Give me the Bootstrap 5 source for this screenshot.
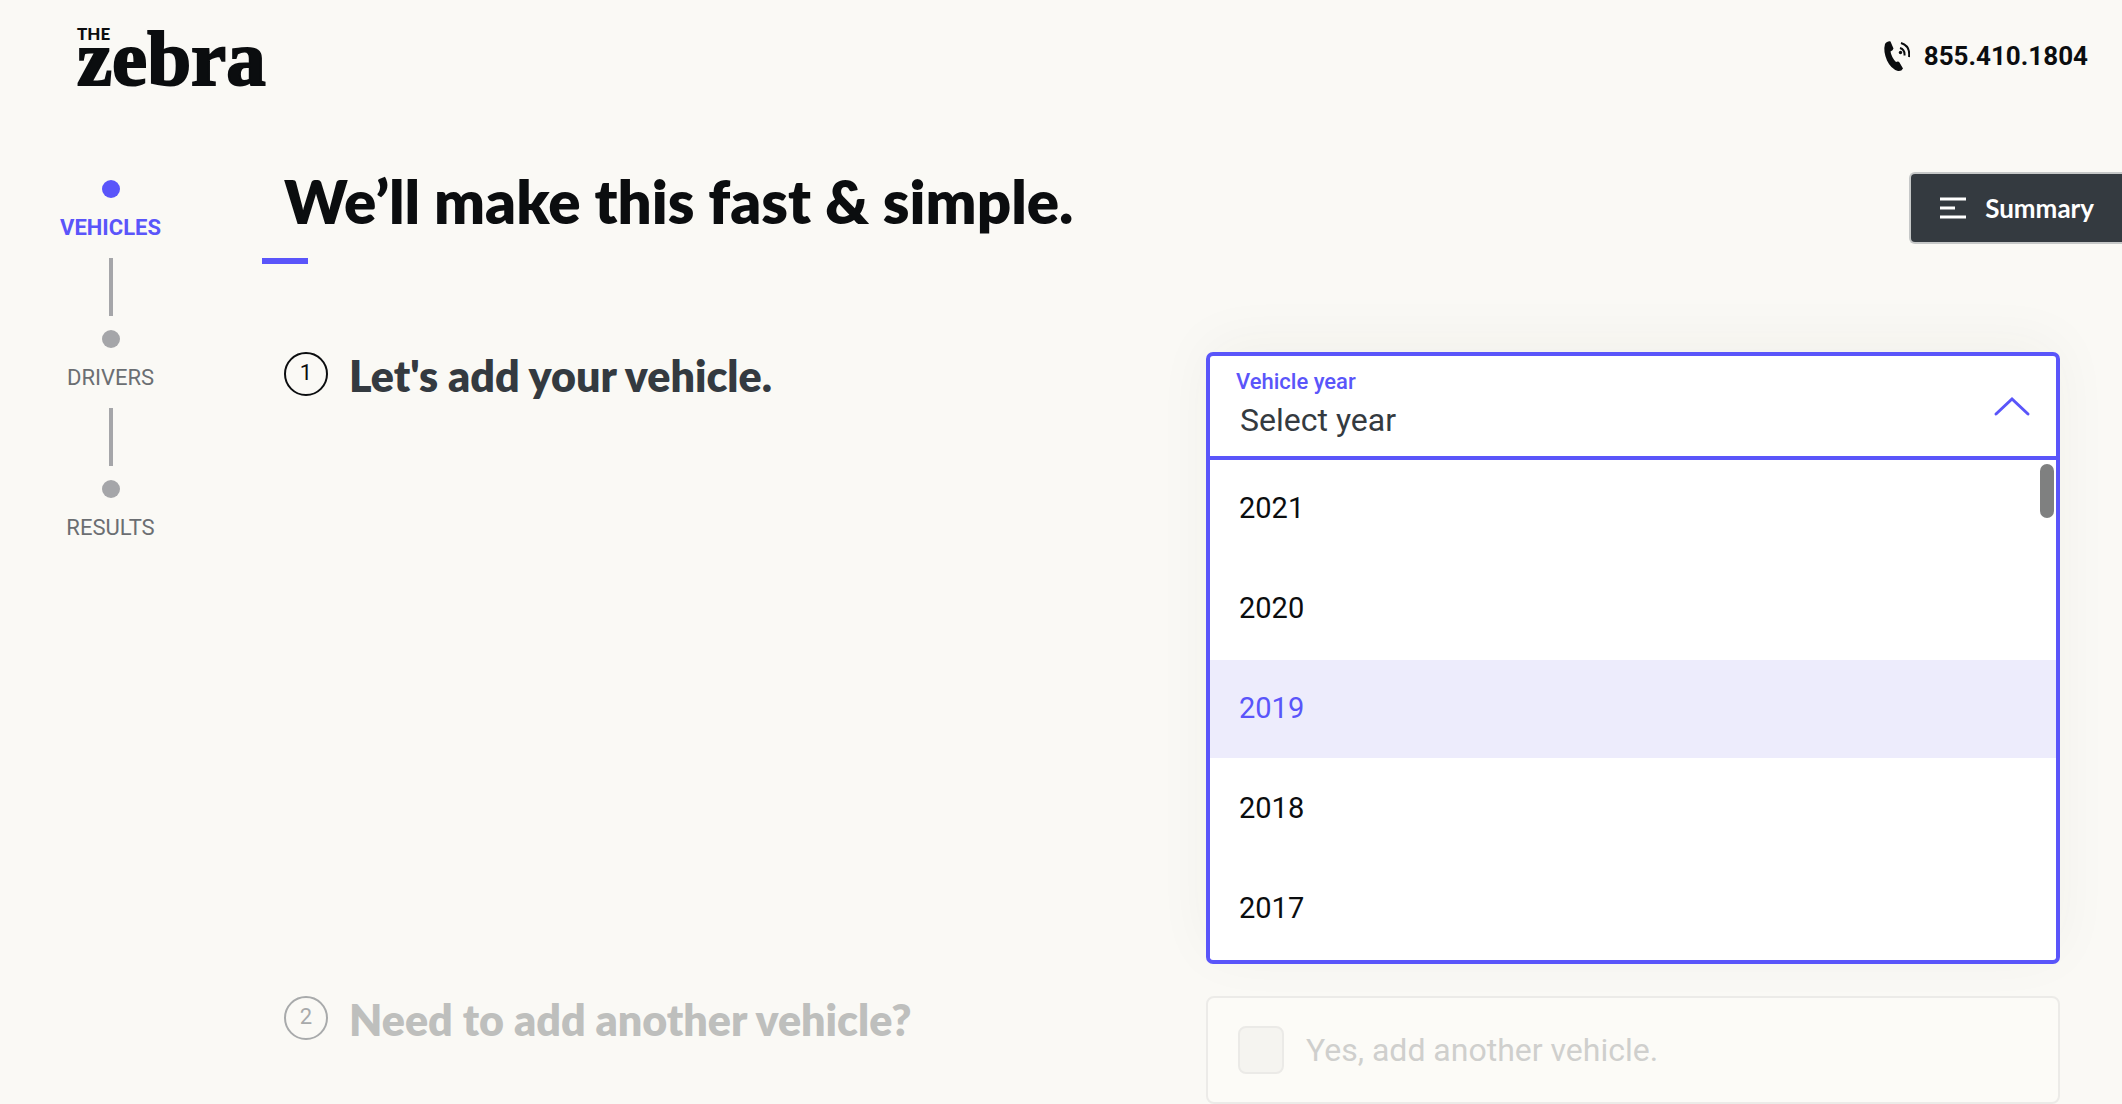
<!DOCTYPE html>
<html lang="en">
<head>
<meta charset="utf-8">
<meta name="viewport" content="width=device-width, initial-scale=1">
<title>The Zebra</title>
<link href="https://cdn.jsdelivr.net/npm/bootstrap@5.3.0/dist/css/bootstrap.min.css" rel="stylesheet">
<style>
:root { --accent: #5a55fa; --ink: #0b0d0f; --slate: #343a40; --paper: #faf9f5; }
body { background: var(--paper); color: var(--ink); font-family: Roboto, "Liberation Sans", sans-serif; }
a { text-decoration: none; }
.site-header { height: 110px; padding: 16px 34px 0 76px; }
.logo, .logo:hover { color: var(--ink); display: block; }
.phone { color: var(--ink); font-size: 26px; line-height: 32px; font-weight: 700; gap: 14px; padding-top: 24px; }
.steps { width: 221px; padding-top: 70px; font-size: 22px; line-height: 24px; }
.steps a { color: #6b6e72; margin-top: 18px; }
.dot { width: 18px; height: 18px; border-radius: 50%; background: #a5a6a9; }
.line { width: 4px; height: 58px; background: #a5a6a9; margin: 18px 0 14px; }
.steps .current .dot { background: var(--accent); }
.steps .current a { color: var(--accent); font-weight: 700; }
.content { padding-left: 63px; }
.title-row { padding-top: 60px; }
.page-title { font: 800 60px/62px Lato, sans-serif; }
.accent-bar { width: 46px; height: 6px; background: var(--accent); margin: 26px 0 0 -22px; }
.summary { background: var(--slate); color: #fff; font: 700 26px/34px Lato, sans-serif; height: 72px; margin-top: 2px;
  border: 2px solid #c6c8c8; border-right: 0; border-radius: 6px 0 0 6px; padding: 0 28px; gap: 18px; }
.questions { padding: 88px 62px 0 0; }
.question { --bs-gutter-x: 68px; }
.question-text { gap: 21px; }
.number { width: 44px; height: 44px; border: 2px solid var(--ink); border-radius: 50%; font-size: 22px; line-height: 38px; text-align: center; }
.question h2 { font: 800 43px/48px Lato, sans-serif; color: var(--slate); }
.inactive .number { color: #a8aaab; border-color: #a8aaab; }
.inactive h2 { color: #bebfbd; }
.picker { border: 4px solid var(--accent); border-radius: 7px; background: #fff; box-shadow: 0 -10px 60px -4px rgba(60, 60, 40, .05); }
.picker-head { height: 104px; border-bottom: 4px solid var(--accent); }
.picker-head label { top: 13px; left: 26px; color: var(--accent); font-size: 22px; line-height: 26px; font-weight: 500; }
.picker-head select { appearance: none; width: 100%; height: 100px; border: 0; outline: 0; background: transparent; color: var(--slate); font-size: 32px; line-height: 40px; padding: 28px 80px 0 30px; }
.chevron { right: 25px; top: 40px; pointer-events: none; }
.year { height: 98px; margin-bottom: 2px; padding: 0 29px; border: 0; background: #fff; color: var(--ink); font-size: 29px; text-align: left; }
.year.chosen { background: #edecfc; color: var(--accent); }
.thumb { width: 14px; height: 54px; border-radius: 7px; background: #7f8080; right: 2px; top: 4px; }
.inactive { margin-top: 32px; }
.tick-card { height: 108px; border: 2px solid #ecebe8; border-radius: 8px; background: #fcfbf7; color: #cfcfcd; font-size: 32px; line-height: 40px; padding: 0 30px; gap: 22px; }
.tick-card input { appearance: none; width: 46px; height: 48px; margin: 0; border: 2px solid #ebeae7; border-radius: 8px; background: #f5f4f0; }
</style>
</head>
<body>
<header class="site-header d-flex justify-content-between align-items-start">
  <a class="logo" href="#" aria-label="The Zebra">
    <svg width="210" height="94" viewBox="0 0 210 94" fill="currentColor">
      <text x="1" y="24" font-family="Lato, sans-serif" font-size="17" font-weight="900">THE</text>
      <text x="1" y="69" font-family="'Liberation Serif', serif" font-size="79" font-weight="700" stroke="currentColor" stroke-width="2">zebra</text>
    </svg>
  </a>
  <a class="phone d-flex align-items-center" href="tel:8554101804">
    <svg width="30" height="32" viewBox="0 0 30 32" fill="none">
      <path d="M5 4C6.500 2 8.500 1 10.500 1.500L13.500 8.500Q13 10.500 10.500 11.500Q11.500 17.500 16 22Q18.500 21 19.500 22.500L23 28.500Q21.500 31.500 18 31Q11 29 7 20.500Q3 11 5 4Z" fill="#0b0d0f"/>
      <circle cx="20.500" cy="12.500" r="1.700" fill="#0b0d0f"/>
      <path d="M20 8Q25 9.500 24.500 15.500M21 3Q30.500 6 29 17" stroke="#0b0d0f" stroke-width="2"/>
    </svg>
    855.410.1804
  </a>
</header>

<div class="d-flex">
  <nav class="steps flex-shrink-0" aria-label="Progress">
    <div class="current d-flex flex-column align-items-center"><span class="dot"></span><a href="#">VEHICLES</a><span class="line"></span></div>
    <div class="d-flex flex-column align-items-center"><span class="dot"></span><a href="#">DRIVERS</a><span class="line"></span></div>
    <div class="d-flex flex-column align-items-center"><span class="dot"></span><a href="#">RESULTS</a></div>
  </nav>

  <main class="content flex-grow-1">
    <div class="title-row d-flex justify-content-between align-items-start">
      <div>
        <h1 class="page-title mb-0">We’ll make this fast &amp; simple.</h1>
        <div class="accent-bar"></div>
      </div>
      <button type="button" class="summary d-flex align-items-center">
        <svg width="28" height="24" viewBox="0 0 28 24" stroke="#fff" stroke-width="3"><path d="M1 3H27M1 12H16M1 21H27"/></svg>
        Summary
      </button>
    </div>

    <form class="questions">
      <section class="row question">
        <div class="col-6 d-flex question-text">
          <span class="number flex-shrink-0">1</span>
          <h2 class="mb-0">Let's add your vehicle.</h2>
        </div>
        <div class="col-6">
          <div class="picker">
            <div class="picker-head position-relative">
              <label for="year" class="position-absolute">Vehicle year</label>
              <select id="year"><option>Select year</option></select>
              <svg class="chevron position-absolute" width="38" height="22" viewBox="0 0 38 22" fill="none" stroke="#5a55fa" stroke-width="3" stroke-linecap="round"><path d="M3 18L19 3L35 18"/></svg>
            </div>
            <div class="position-relative d-flex flex-column" role="listbox" aria-label="Vehicle year">
              <button type="button" role="option" class="year">2021</button>
              <button type="button" role="option" class="year">2020</button>
              <button type="button" role="option" class="year chosen" aria-selected="true">2019</button>
              <button type="button" role="option" class="year">2018</button>
              <button type="button" role="option" class="year">2017</button>
              <span class="thumb position-absolute"></span>
            </div>
          </div>
        </div>
      </section>

      <section class="row question inactive">
        <div class="col-6 d-flex question-text">
          <span class="number flex-shrink-0">2</span>
          <h2 class="mb-0">Need to add another vehicle?</h2>
        </div>
        <div class="col-6">
          <div class="tick-card d-flex align-items-center">
            <input type="checkbox" id="another">
            <label for="another">Yes, add another vehicle.</label>
          </div>
        </div>
      </section>
    </form>
  </main>
</div>
<script src="https://cdn.jsdelivr.net/npm/bootstrap@5.3.0/dist/js/bootstrap.bundle.min.js"></script>
</body>
</html>
